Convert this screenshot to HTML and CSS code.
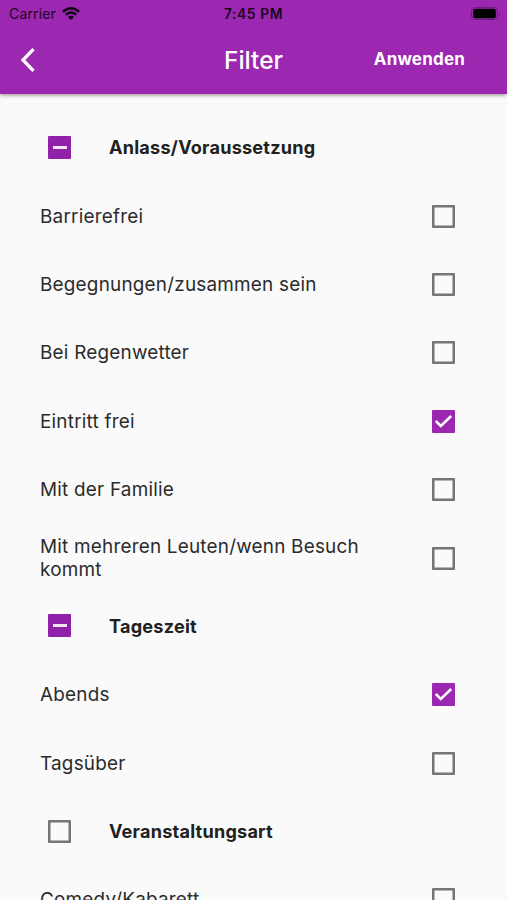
FILE: index.html
```html
<!doctype html>
<html lang="de">
<head>
<meta charset="UTF-8">
<title>Filter</title>
<meta name="viewport" content="width=device-width, initial-scale=1.0">
<link rel="stylesheet" href="styles.css">
</head>
<body>
  <header class="header">
    <div class="status">
      <div class="carrier"><span>Carrier</span>
        <svg class="wifi" viewBox="0 0 18 13"><path d="M1 4.8Q9-2.2 17 4.8M3.8 7.7Q9 3.3 14.2 7.7" fill="none" stroke="#120416" stroke-width="2.5"/><path d="M5.9 9.9Q9 7.5 12.1 9.9L9 13z" fill="#120416"/></svg>
      </div>
      <div class="time">7:45 PM</div>
      <svg class="battery" viewBox="0 0 30 13"><rect x=".5" y=".5" width="26" height="12" rx="3.5" fill="none" stroke="#6b1b7a"/><rect x="2.2" y="1.8" width="22.6" height="9.4" rx="2" fill="#000"/><path d="M28 4.5q2 2 0 4z" fill="#6b1b7a"/></svg>
    </div>
    <nav class="bar">
      <svg class="back" viewBox="0 0 16 26"><path d="M13.5 2.2L3 13l10.5 10.8" fill="none" stroke="#fff" stroke-width="3.3"/></svg>
      <h1 class="title">Filter</h1>
      <div class="apply">Anwenden</div>
    </nav>
  </header>
  <main class="list">
    <div class="group"><span class="box minus"></span><h2>Anlass/Voraussetzung</h2></div>
    <div class="row"><span class="label">Barrierefrei</span><span class="box"></span></div>
    <div class="row"><span class="label">Begegnungen/zusammen sein</span><span class="box"></span></div>
    <div class="row"><span class="label">Bei Regenwetter</span><span class="box"></span></div>
    <div class="row"><span class="label">Eintritt frei</span><span class="box checked"><svg viewBox="0 0 23 23"><path d="M3.8 11l5 4.9L19.2 6" fill="none" stroke="#fff" stroke-width="2.5"/></svg></span></div>
    <div class="row"><span class="label">Mit der Familie</span><span class="box"></span></div>
    <div class="row"><span class="label">Mit mehreren Leuten/wenn Besuch kommt</span><span class="box"></span></div>
    <div class="group"><span class="box minus"></span><h2>Tageszeit</h2></div>
    <div class="row"><span class="label">Abends</span><span class="box checked"><svg viewBox="0 0 23 23"><path d="M3.8 11l5 4.9L19.2 6" fill="none" stroke="#fff" stroke-width="2.5"/></svg></span></div>
    <div class="row"><span class="label">Tagsüber</span><span class="box"></span></div>
    <div class="group"><span class="box"></span><h2>Veranstaltungsart</h2></div>
    <div class="row"><span class="label">Comedy/Kabarett</span><span class="box"></span></div>
  </main>
</body>
</html>
```

FILE: styles.css
```css
*{
	box-sizing:border-box;
}
html, body{
	height:100%;
	overflow:hidden;
}
body{
	margin:0;
	background:#fafafa;
	color:#212121;
	font-family:Inter, "Liberation Sans", sans-serif;
}
.header{
	position:relative;
	height:94px;
	background:#9c27b0;
	box-shadow:0 1px 4px rgba(0,0,0,.45);
}
.status{
	display:grid;
	grid-template-columns:1fr auto 1fr;
	align-items:center;
	height:26px;
	color:#1c0721;
	font-size:14px;
}
.carrier{
	display:flex;
	align-items:center;
	gap:6px;
	padding-left:9px;
	letter-spacing:.15px;
}
.wifi{
	width:18px;
	height:13px;
}
.time{
	padding-top:2px;
	font-size:13.8px;
	font-weight:600;
	letter-spacing:.6px;
}
.battery{
	justify-self:end;
	width:30px;
	height:13px;
	margin-right:6px;
}
.bar{
	display:grid;
	grid-template-columns:1fr auto 1fr;
	align-items:center;
	height:67px;
	color:#fff;
}
.back{
	width:16px;
	height:26px;
	margin-left:20px;
}
.title{
	margin:0;
	font-size:24.5px;
	font-weight:500;
}
.apply{
	justify-self:end;
	margin-right:42px;
	padding-bottom:1px;
	font-size:17px;
	font-weight:700;
	letter-spacing:.2px;
}
.list{
	padding-top:19px;
}
.group, .row{
	display:flex;
	align-items:center;
	height:68.4px;
}
.group{
	padding-left:48px;
}
.group h2{
	margin:0 0 0 38px;
	font-size:18.1px;
	font-weight:700;
	letter-spacing:.22px;
}
.row{
	justify-content:space-between;
	padding:1px 52px 0 40px;
}
.label{
	max-width:345px;
	color:#2b2b2b;
	font-size:18.9px;
	line-height:23px;
	letter-spacing:.22px;
}
.box{
	display:flex;
	align-items:center;
	justify-content:center;
	flex:none;
	width:23px;
	height:23px;
	border-radius:1px;
	box-shadow:inset 0 0 0 2.5px #757575;
}
.minus, .checked{
	background:#9c27b0;
	box-shadow:none;
}
.minus{
	background:#9021a8;
}
.minus::after{
	content:'';
	width:14px;
	height:3px;
	background:#f3e3f6;
}
.checked svg{
	width:23px;
	height:23px;
}
```
